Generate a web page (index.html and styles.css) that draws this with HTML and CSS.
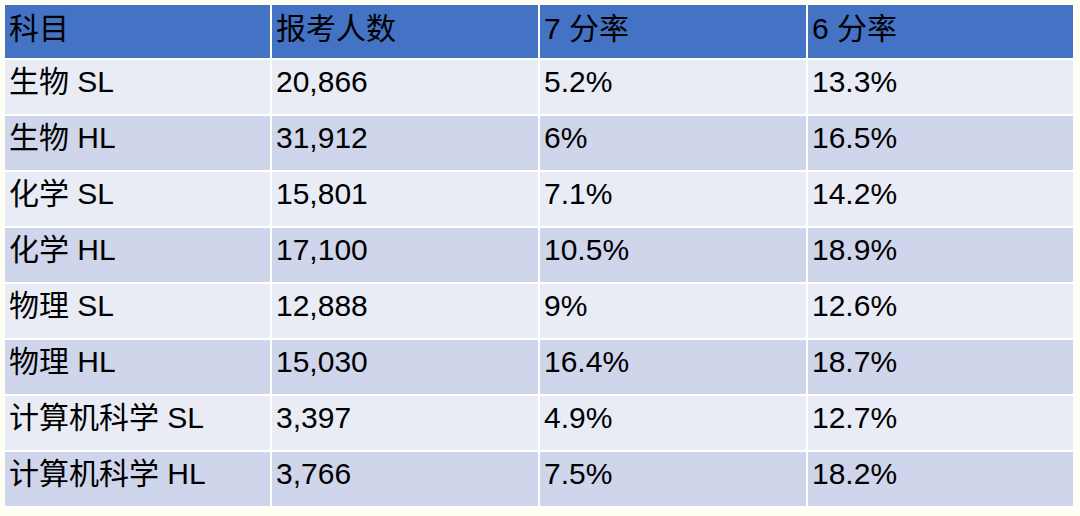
FILE: index.html
```html
<!DOCTYPE html>
<html lang="zh">
<head>
<meta charset="utf-8">
<title>IB 科学科目成绩</title>
<link rel="stylesheet" href="styles.css">
</head>
<body>
<div class="table">
  <div class="cell head">科目</div>
  <div class="cell head">报考人数</div>
  <div class="cell head">7 分率</div>
  <div class="cell head">6 分率</div>

  <div class="cell light">生物 SL</div>
  <div class="cell light">20,866</div>
  <div class="cell light">5.2%</div>
  <div class="cell light">13.3%</div>

  <div class="cell dark">生物 HL</div>
  <div class="cell dark">31,912</div>
  <div class="cell dark">6%</div>
  <div class="cell dark">16.5%</div>

  <div class="cell light">化学 SL</div>
  <div class="cell light">15,801</div>
  <div class="cell light">7.1%</div>
  <div class="cell light">14.2%</div>

  <div class="cell dark">化学 HL</div>
  <div class="cell dark">17,100</div>
  <div class="cell dark">10.5%</div>
  <div class="cell dark">18.9%</div>

  <div class="cell light">物理 SL</div>
  <div class="cell light">12,888</div>
  <div class="cell light">9%</div>
  <div class="cell light">12.6%</div>

  <div class="cell dark">物理 HL</div>
  <div class="cell dark">15,030</div>
  <div class="cell dark">16.4%</div>
  <div class="cell dark">18.7%</div>

  <div class="cell light">计算机科学 SL</div>
  <div class="cell light">3,397</div>
  <div class="cell light">4.9%</div>
  <div class="cell light">12.7%</div>

  <div class="cell dark">计算机科学 HL</div>
  <div class="cell dark">3,766</div>
  <div class="cell dark">7.5%</div>
  <div class="cell dark">18.2%</div>
</div>
</body>
</html>
```

FILE: styles.css
```css
html, body {
  margin: 0;
  padding: 0;
  background: #fffff3;
}

body {
  padding: 4px 0 0 4px;
  font-family: "Liberation Sans", Arial, "Noto Sans CJK SC", sans-serif;
  color: #000;
}

.table {
  width: 1070px;
  box-sizing: border-box;
  padding: 1px;
  background: #ffffff;
  display: grid;
  grid-template-columns: 265px 266px 266px 265px;
  grid-template-rows: 53px repeat(8, 54px);
  gap: 2px;
}

.cell {
  font-size: 30px;
  line-height: 34px;
  padding: 5px 0 0 4px;
  white-space: nowrap;
}

.head {
  background: #4472c4;
  padding-top: 7px;
}

.light {
  background: #e9ebf5;
}

.dark {
  background: #cfd5ea;
}
```
